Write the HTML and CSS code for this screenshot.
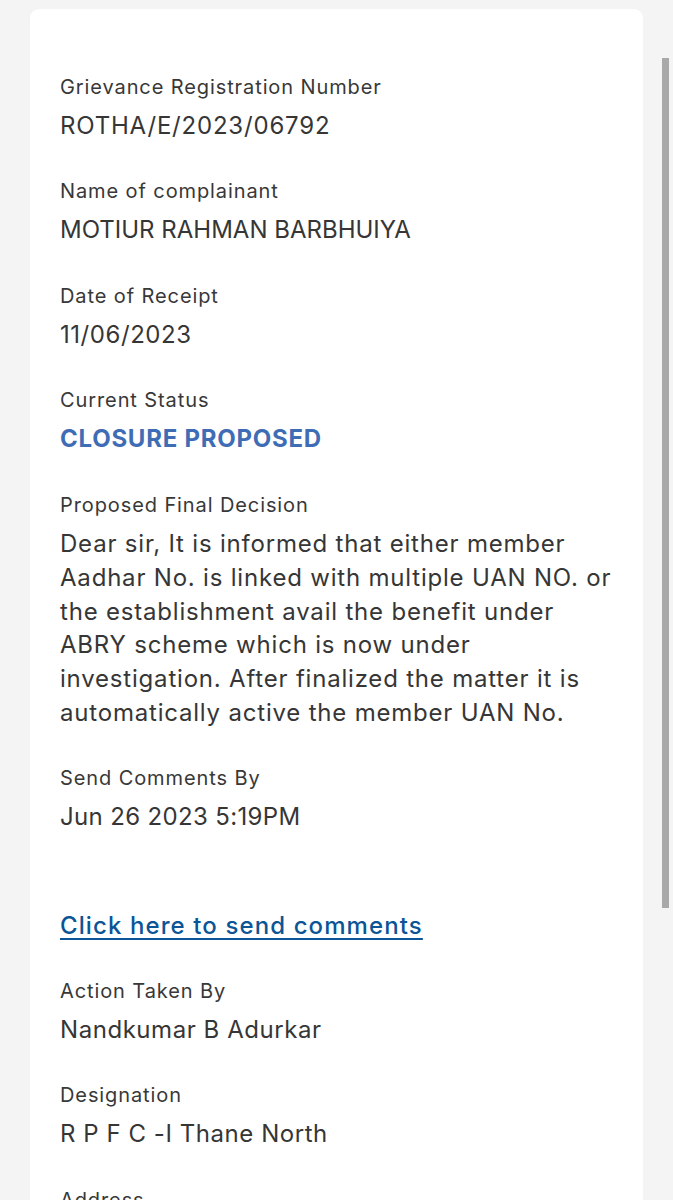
FILE: index.html
```html
<!DOCTYPE html>
<html lang="en">
<head>
<meta charset="utf-8">
<title>Grievance Status</title>
<link rel="stylesheet" href="styles.css">
</head>
<body>
<div class="page">
  <div class="card">
    <div class="field">
      <div class="label">Grievance Registration Number</div>
      <div class="value code">ROTHA/E/2023/06792</div>
    </div>
    <div class="field">
      <div class="label">Name of complainant</div>
      <div class="value caps">MOTIUR RAHMAN BARBHUIYA</div>
    </div>
    <div class="field">
      <div class="label">Date of Receipt</div>
      <div class="value">11/06/2023</div>
    </div>
    <div class="field">
      <div class="label">Current Status</div>
      <div class="value status">CLOSURE PROPOSED</div>
    </div>
    <div class="field">
      <div class="label">Proposed Final Decision</div>
      <div class="value para">Dear sir, It is informed that either member
Aadhar No. is linked with multiple UAN NO. or
the establishment avail the benefit under
ABRY scheme which is now under
investigation. After finalized the matter it is
automatically active the member UAN No.</div>
    </div>
    <div class="field">
      <div class="label">Send Comments By</div>
      <div class="value date">Jun 26 2023 5:19PM</div>
    </div>
    <div class="link-row">
      <a class="link" href="#">Click here to send comments</a>
    </div>
    <div class="field">
      <div class="label">Action Taken By</div>
      <div class="value">Nandkumar B Adurkar</div>
    </div>
    <div class="field">
      <div class="label">Designation</div>
      <div class="value">R P F C -I Thane North</div>
    </div>
    <div class="field last">
      <div class="label">Address</div>
    </div>
  </div>
  <div class="scrollbar"></div>
</div>
</body>
</html>
```

FILE: styles.css
```css
html, body {
  margin: 0;
  padding: 0;
  background: #f4f4f4;
}
body {
  font-family: "Inter", "Liberation Sans", sans-serif;
  color: #333333;
  height: 1200px;
  overflow: hidden;
}
.page {
  position: relative;
  height: 1200px;
  padding: 9px 30px 0 30px;
  box-sizing: border-box;
  overflow: hidden;
}
.card {
  background: #ffffff;
  border-radius: 9px;
  padding: 64px 30px 40px 30px;
  display: flex;
  flex-direction: column;
}
.field {
  display: flex;
  flex-direction: column;
  gap: 8px;
  margin-bottom: 34.7px;
}
.label {
  font-size: 20px;
  line-height: 28px;
  color: #383838;
  letter-spacing: 0.9px;
}
.value {
  font-size: 24px;
  line-height: 33.8px;
  color: #363636;
  letter-spacing: 0.55px;
}
.code {
  letter-spacing: 0.8px;
}
.caps {
  letter-spacing: 0;
}
.date {
  letter-spacing: 0.35px;
}
.para {
  white-space: pre-line;
  letter-spacing: 0.8px;
}
.status {
  color: #3f6db5;
  font-weight: 700;
  letter-spacing: 0.75px;
}
.link-row {
  margin-top: 40px;
  margin-bottom: 34px;
  font-size: 24px;
  line-height: 34px;
}
.link {
  color: #0b5597;
  font-weight: 500;
  letter-spacing: 1.1px;
  text-decoration: underline;
  text-underline-offset: 4px;
  text-decoration-thickness: 2px;
}
.scrollbar {
  position: absolute;
  left: 662px;
  top: 58px;
  width: 7px;
  height: 850px;
  background: #a9a9a9;
}
```
